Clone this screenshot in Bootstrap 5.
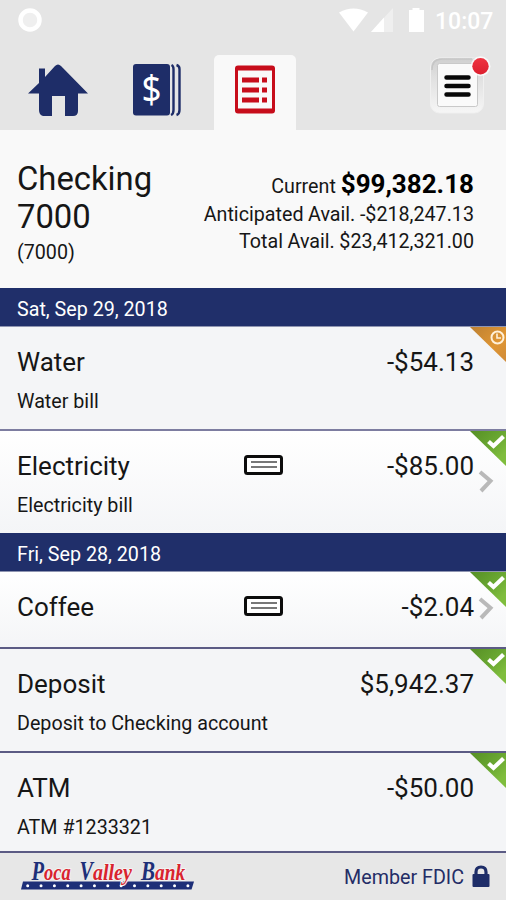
<!DOCTYPE html>
<html lang="en">
<head>
<meta charset="utf-8">
<meta name="viewport" content="width=device-width, initial-scale=1">
<title>Checking 7000</title>
<link href="https://cdn.jsdelivr.net/npm/bootstrap@5.3.0/dist/css/bootstrap.min.css" rel="stylesheet">
<style>
body{font-family:Roboto,"Liberation Sans",sans-serif;color:#161616;background:#f9f9f9;width:506px;height:900px;overflow:hidden}
svg{display:block;flex:none}
.topbar{height:130px;background:#e5e5e5}
.statusbar{height:55px;padding:7px 13px 22px 18px;color:#fff}
.clock{font-size:23px;line-height:25px;font-weight:500;width:58px;text-align:right;padding-top:2px}
.tabs{height:75px}
.tab-home{width:88px;padding:9px 0 0 28px}
.tab-checks{width:126px;padding:4px 0 0 45px}
.tab-list{width:82px;background:#f9f9f9;border-radius:5px 5px 0 0;padding:10px 0 0 21px}
.menu-btn{width:57px;height:60px;margin-right:19px;border:0;background:none}
.account{height:158px;padding:30px 32px 0 17px}
.acct-name{font-size:32.8px;line-height:38px}
.acct-num{font-size:19.7px;line-height:28px;margin-top:3px}
.balances{font-size:19.7px;line-height:27px;padding-top:11px}
.balances .cur{font-size:26px;font-weight:700;color:#000}
.balances .avail{position:relative;top:1px;word-spacing:-.3px}
.datebar{height:38px;background:#202f6a;color:#fff;font-size:19.7px;line-height:43px;padding-left:17px}
.txn{background:#f4f5f7;border-top:2px solid #7d7da0;height:104px;padding:17px 32px 0 17px}
.txn.first{border-top:1px solid #8f95b1}
.txn.linked{background:linear-gradient(#fff,#f4f5f7)}
.txn.thin{border-top-color:#5b5b84}
.t26{font-size:26px;line-height:36px}
.t20{font-size:19.7px;line-height:24px;margin-top:10px}
.h-water{height:103px}.h-coffee{height:76px}.h-atm{height:100px}
.flag{position:absolute;right:0;top:0}
.chev{position:absolute;right:11px}
.chev-a{top:39px}.chev-b{top:25px}
.check-ico{position:absolute;left:243px;top:23px}
.foot{height:49px;background:#e7e7e7;border-top:2px solid #5b5b84;padding:0 15px 0 20px;color:#242d66;font-size:19.7px}
.fdic{padding-top:2px}
</style>
<script src="https://cdn.jsdelivr.net/npm/bootstrap@5.3.0/dist/js/bootstrap.bundle.min.js"></script>
</head>
<body>
<svg width="0" height="0" class="position-absolute">
  <defs>
    <linearGradient id="green" x1="0" y1="0" x2="1" y2="1"><stop offset="0" stop-color="#568f25"/><stop offset=".5" stop-color="#6aa832"/><stop offset=".8" stop-color="#7fbd3d"/></linearGradient>
    <linearGradient id="orange" x1="0" y1="0" x2="1" y2="1"><stop offset="0" stop-color="#bd8032"/><stop offset=".6" stop-color="#df9634"/><stop offset="1" stop-color="#cf8a38"/></linearGradient>
    <linearGradient id="frame" x1="0" y1="0" x2="0" y2="1"><stop offset="0" stop-color="#cfcfcf"/><stop offset=".35" stop-color="#e0e0e0"/><stop offset="1" stop-color="#f6f6f6"/></linearGradient>
    <linearGradient id="ball" x1="0" y1="0" x2="0" y2="1"><stop offset="0" stop-color="#ef3340"/><stop offset="1" stop-color="#dc1f2e"/></linearGradient>
    <symbol id="ok" viewBox="0 0 36 36"><path d="M0 0H36V35Z" fill="url(#green)"/><path d="M18.500 10.500L23.500 15L33.500 5.500" fill="none" stroke="#fff" stroke-width="4.200"/></symbol>
    <symbol id="chevron" viewBox="0 0 17 24"><path d="M2 2L12.500 11L3 21" fill="none" stroke="#b9b9b9" stroke-width="4"/></symbol>
    <symbol id="slip" viewBox="0 0 41 22"><rect x="2.500" y="2.500" width="36" height="17" rx="2" fill="#fff" stroke="#0c0c0c" stroke-width="3"/><path d="M8 8H34M8 13H34" stroke="#777" stroke-width="2"/></symbol>
  </defs>
</svg>

<header class="topbar">
  <div class="statusbar d-flex justify-content-between align-items-center">
    <svg width="24" height="24" viewBox="0 0 24 24"><circle cx="12" cy="12" r="9.500" fill="#efefef" stroke="#fff" stroke-width="4.500"/></svg>
    <div class="d-flex align-items-center">
      <svg width="88" height="26" viewBox="0 0 88 26"><path d="M0 5.500Q14.500-2.500 29 5.500L14.500 24.500Z" fill="#fff"/><path d="M54 1V25H32Z" fill="#efefef"/><path d="M45 10.500V25H32Z" fill="#fff"/><path d="M70 3H73.500V1H80.500V3H85V25H70Z" fill="#fff"/></svg>
      <span class="clock ms-2">10:07</span>
    </div>
  </div>
  <nav class="tabs d-flex">
    <a class="tab-home" href="#" aria-label="Home"><svg width="60" height="53" viewBox="0 0 60 53" fill="#1e2d68"><path d="M0 29.500L11 19V4.500H17V13L27 2Q30 -1 33 2L60 29.500H50V47Q50 52 45 52H37V32H24V52H15Q11 51 11 46V29.500Z"/></svg></a>
    <a class="tab-checks text-decoration-none" href="#" aria-label="Accounts"><svg width="49" height="58" viewBox="0 -5 49 58"><rect x="0" y="0" width="37" height="51.500" rx="3" fill="#1e2d68"/><path d="M38.500 1Q40.500 2 40.500 5V46Q40.500 50 38 51M43.500 1Q46.500 2 46.500 5V46Q46.500 50 43.500 51" fill="none" stroke="#1e2d68" stroke-width="2.400"/><text transform="translate(18.500 38.500) scale(.92 1)" text-anchor="middle" font-family="Noto Sans, Open Sans, sans-serif" font-size="38" fill="#fff">$</text></svg></a>
    <a class="tab-list" href="#" aria-label="Transactions"><svg width="41" height="50" viewBox="0 0 41 50"><path fill="#c70d1b" fill-rule="evenodd" d="M3 .5H37Q40 .5 40 3.500V45.500Q40 48.500 37 48.500H3Q0 48.500 0 45.500V3.500Q0 .5 3 .5ZM3 5.500V43.500H37V5.500Z"/><path fill="#c70d1b" d="M7 12.500H24V17.500H7ZM27 12.500H32V17.500H27ZM7 22.500H24V27.500H7ZM27 22.500H32V27.500H27ZM7 32.500H24V37.500H7ZM27 32.500H32V37.500H27Z"/></svg></a>
    <button class="menu-btn ms-auto p-0" aria-label="Menu"><svg width="64" height="60" viewBox="0 0 64 60"><rect x="0.500" y="3" width="53" height="55" rx="9" fill="url(#frame)" stroke="#f0f0f0"/><path d="M2 15Q2 4 12 4H42" fill="none" stroke="#c6c6c6" stroke-width="1.500"/><rect x="7.500" y="8.500" width="40" height="43" rx="2" fill="#fafafa" stroke="#c9c9c9"/><path d="M16.500 22.500H38.500M16.500 31H38.500M16.500 39.500H38.500" stroke="#080808" stroke-width="4.500" stroke-linecap="round"/><circle cx="50.500" cy="11.300" r="10" fill="#fff" opacity=".75"/><circle cx="50.500" cy="11.300" r="8.200" fill="url(#ball)"/></svg></button>
  </nav>
</header>

<section class="account d-flex justify-content-between">
  <div>
    <h1 class="acct-name fw-normal mb-0">Checking<br>7000</h1>
    <div class="acct-num">(7000)</div>
  </div>
  <div class="balances text-end">
    <div>Current <span class="cur">$99,382.18</span></div>
    <div class="avail">Anticipated Avail. -$218,247.13</div>
    <div class="avail">Total Avail. $23,412,321.00</div>
  </div>
</section>

<main>
  <div class="datebar">Sat, Sep 29, 2018</div>
  <article class="txn first h-water position-relative">
    <div class="d-flex justify-content-between t26"><span>Water</span><span>-$54.13</span></div>
    <div class="t20">Water bill</div>
    <svg class="flag" width="36" height="36" viewBox="0 0 36 36"><path d="M0 0H36V35Z" fill="url(#orange)"/><circle cx="27.500" cy="10.500" r="6" fill="none" stroke="#fff0d8" stroke-width="2"/><path d="M27 6.500V11H31" fill="none" stroke="#fff0d8" stroke-width="1.600"/></svg>
  </article>
  <article class="txn linked position-relative">
    <div class="d-flex justify-content-between t26"><span>Electricity</span><span>-$85.00</span></div>
    <div class="t20">Electricity bill</div>
    <svg class="check-ico" width="41" height="22"><use href="#slip"/></svg>
    <svg class="flag" width="36" height="36"><use href="#ok"/></svg>
    <svg class="chev chev-a" width="17" height="24"><use href="#chevron"/></svg>
  </article>
  <div class="datebar">Fri, Sep 28, 2018</div>
  <article class="txn first linked h-coffee position-relative">
    <div class="d-flex justify-content-between t26"><span>Coffee</span><span>-$2.04</span></div>
    <svg class="check-ico" width="41" height="22"><use href="#slip"/></svg>
    <svg class="flag" width="36" height="36"><use href="#ok"/></svg>
    <svg class="chev chev-b" width="17" height="24"><use href="#chevron"/></svg>
  </article>
  <article class="txn thin position-relative">
    <div class="d-flex justify-content-between t26"><span>Deposit</span><span>$5,942.37</span></div>
    <div class="t20">Deposit to Checking account</div>
    <svg class="flag" width="36" height="36"><use href="#ok"/></svg>
  </article>
  <article class="txn thin h-atm position-relative">
    <div class="d-flex justify-content-between t26"><span>ATM</span><span>-$50.00</span></div>
    <div class="t20">ATM #1233321</div>
    <svg class="flag" width="36" height="36"><use href="#ok"/></svg>
  </article>
</main>

<footer class="foot d-flex justify-content-between align-items-center">
  <svg width="176" height="45" viewBox="0 -3 176 45" font-family="Liberation Serif, serif" font-weight="bold" font-style="italic">
    <path d="M3 24.500H174L171.500 32.500H1Z" fill="#1e2f78"/>
    <path d="M7.700 28.700H168.500" stroke="#fff" stroke-width="3" stroke-dasharray="0 13.350" stroke-linecap="round"/>
    <g stroke="#f3f3f3" stroke-width="2" paint-order="stroke" fill="#d9232e" font-size="22.500">
      <text transform="translate(24 23) scale(.82 1)">oca</text>
      <text transform="translate(73 23) scale(.89 1)">alley</text>
      <text transform="translate(135 23) scale(.86 1)">ank</text>
    </g>
    <g fill="#1e2f78" font-size="28">
      <text transform="translate(11.500 23) scale(.73 1)">P</text>
      <text transform="translate(59.500 23) scale(.72 1)">V</text>
      <text transform="translate(121 23) scale(.75 1)">B</text>
    </g>
  </svg>
  <div class="fdic d-flex align-items-center gap-2"><span>Member FDIC</span>
    <svg width="19" height="24" viewBox="0 0 19 24"><path d="M4 10V7Q4 2 9 2T14 7V10" fill="none" stroke="#1e2d68" stroke-width="3.200"/><rect x="0.500" y="9" width="17" height="13" rx="1" fill="#1e2d68"/></svg>
  </div>
</footer>
</body>
</html>
